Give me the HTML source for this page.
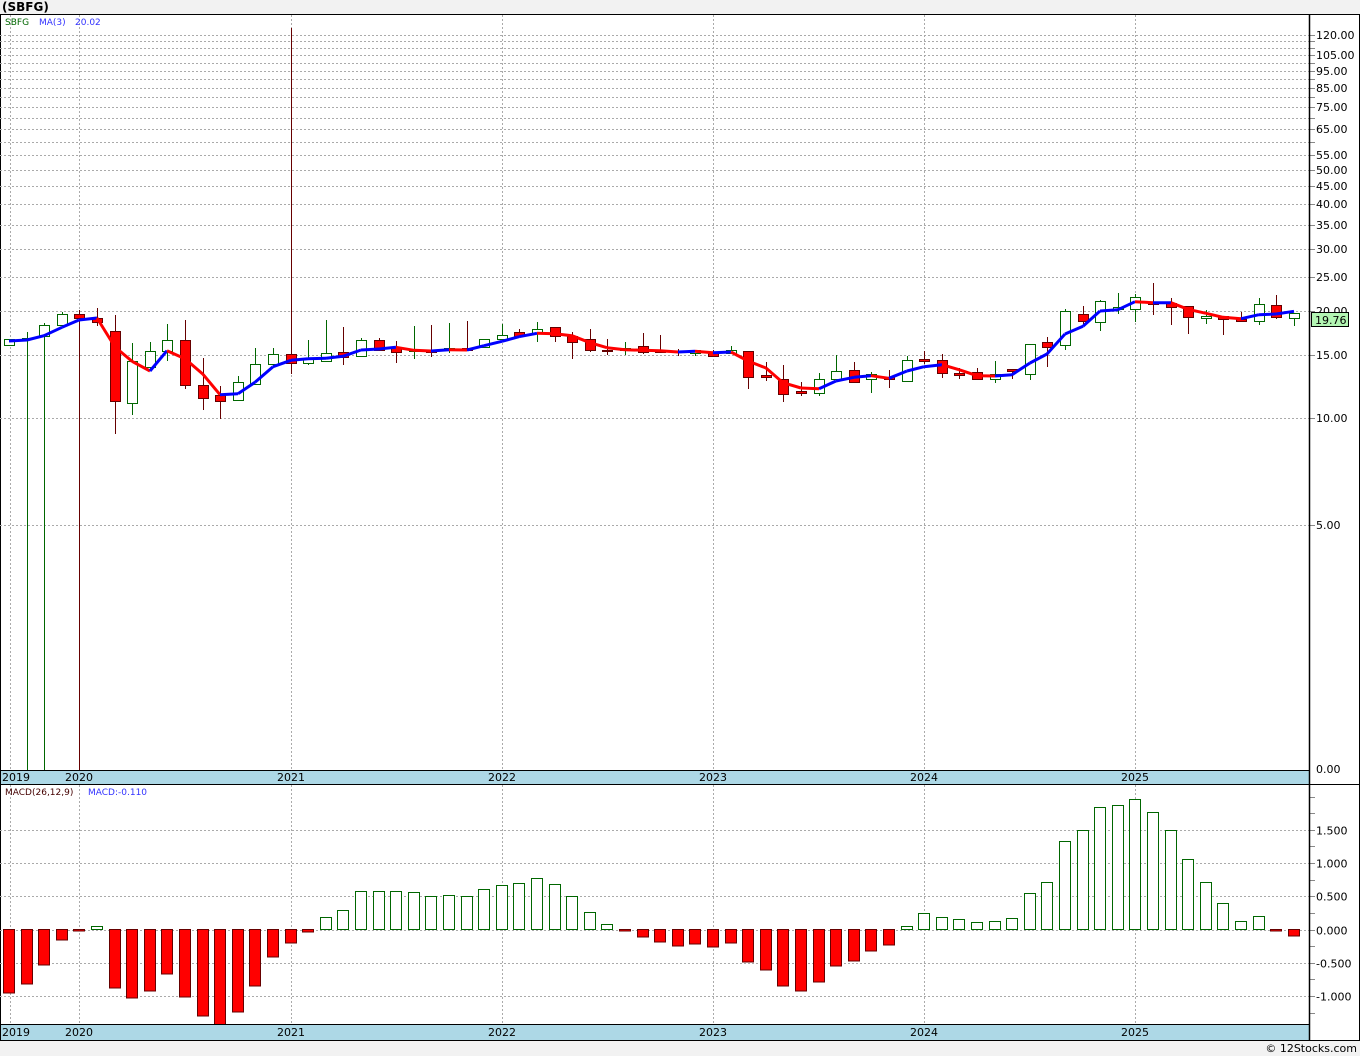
<!DOCTYPE html>
<html><head><meta charset="utf-8">
<style>
html,body{margin:0;padding:0;background:#f2f2f2;width:1360px;height:1056px;overflow:hidden;font-family:"DejaVu Sans","Liberation Sans",sans-serif}
svg{position:absolute;left:0;top:0}
</style></head>
<body>
<svg id="c" width="1360" height="1056" xmlns="http://www.w3.org/2000/svg" font-family="DejaVu Sans, Liberation Sans, sans-serif">
<rect x="0" y="0" width="1360" height="1056" fill="#f2f2f2"/>
<text x="2" y="11" font-size="12" font-weight="bold" fill="#000">(SBFG)</text>
<rect x="0.5" y="14.5" width="1359" height="1026" fill="#fff" stroke="#000"/>
<g id="g"></g>
</svg>
<script>
var g=document.getElementById('g'),s='';
function L(x1,y1,x2,y2,c,w,d){s+='<line x1="'+x1+'" y1="'+y1+'" x2="'+x2+'" y2="'+y2+'" stroke="'+c+'" stroke-width="'+(w||1)+'"'+(d?' stroke-dasharray="'+d+'"':'')+'/>';}
function R(x,y,w,h,f,st){s+='<rect x="'+x+'" y="'+y+'" width="'+w+'" height="'+h+'" fill="'+f+'" stroke="'+st+'" stroke-width="1"/>';}
function T(x,y,t,c,sz,a){s+='<text x="'+x+'" y="'+y+'" font-size="'+(sz||11)+'" fill="'+c+'"'+(a?' text-anchor="'+a+'"':'')+'>'+t+'</text>';}
function py(p){return 418-355*Math.log10(p/10);}
var grid='#aaa',dd='2,2';
// price gridlines
for(var p=5;p<=120;p+=5){var y=Math.round(py(p))+0.5;L(0,y,1309,y,grid,1,dd);L(1309,y,1315,y,'#888',1);}
var lab=[120,105,95,85,75,65,55,50,45,40,35,30,25,20,15,10,5];
lab.forEach(function(p){T(1316,Math.round(py(p))+4,p.toFixed(2),'#000',11);});
T(1316,773,'0.00','#000',11);
// vertical year lines
var yrs=[[10,'2019'],[79,'2020'],[291,'2021'],[502,'2022'],[713,'2023'],[924,'2024'],[1135,'2025']];
yrs.forEach(function(v){L(v[0]+0.5,15,v[0]+0.5,770,grid,1,dd);L(v[0]+0.5,785,v[0]+0.5,1024,grid,1,dd);});
// MACD gridlines
var mz=929.5,ms=66.5;
[1.5,1,0.5,0,-0.5,-1].forEach(function(v){var y=Math.round(mz-v*ms)+0.5;L(0,y,1309,y,grid,1,dd);T(1316,y+4,v.toFixed(3),'#000',11);});
for(var v=-1.25;v<=2;v+=0.25){var y=Math.round(mz-v*ms)+0.5;L(1309,y,1315,y,'#888',1);}
// candles: [bodyTop, bodyBot, high, low, up]
var C=[[339,345,339,345,1],[338,339,332,770,1],[325,336,323,770,1],[314,325,312,325,1],[314,318,310,770,0],[318,322,308,326,0],[331,401,315,434,0],[361,403,343,415,1],[351,367,342,371,1],[340,351,324,361,1],[340,385,320,389,0],[385,398,358,410,0],[395,401,386,419,0],[382,400,376,400,1],[364,384,348,384,1],[354,364,348,364,1],[354,363,28,374,0],[359,363,340,365,1],[353,361,320,361,1],[352,357,327,365,0],[340,356,338,356,1],[340,350,338,350,0],[347,352,341,363,0],[349,351,326,359,1],[350,352,325,357,0],[348,350,323,353,1],[348,350,321,350,0],[339,347,339,347,1],[335,339,324,339,1],[332,336,329,336,0],[329,333,322,342,1],[327,336,327,342,0],[336,342,332,359,0],[339,350,329,352,0],[350,351,339,355,0],[348,350,342,355,1],[346,352,333,354,0],[351,352,335,353,0],[351,352,349,356,0],[350,353,350,356,1],[353,356,350,356,0],[350,353,346,353,1],[351,377,351,389,0],[375,377,362,381,0],[379,394,365,402,0],[391,393,382,396,0],[379,393,373,396,1],[371,379,355,379,1],[370,382,362,382,0],[374,379,372,393,1],[377,379,370,388,0],[360,381,356,381,1],[359,361,351,364,0],[360,373,354,378,0],[373,375,368,379,0],[372,379,368,379,0],[374,379,361,383,1],[369,371,369,379,0],[344,374,344,380,1],[342,347,337,367,0],[311,345,309,350,1],[314,321,306,324,0],[301,322,300,331,1],[307,309,293,314,1],[297,309,294,322,1],[302,304,283,315,0],[303,307,298,325,0],[306,317,306,334,0],[316,318,310,324,1],[316,319,316,335,0],[319,321,312,321,0],[304,321,298,325,1],[305,317,295,319,0],[313,318,313,326,1]];
function cx(i){return Math.round(9+17.6*i);}
C.forEach(function(c,i){var x=cx(i)+0.5,col=c[4]?'#060':'#600';
 L(x,c[2],x,c[0],col,1);L(x,c[1],x,c[3],col,1);
 var h=Math.max(c[1]-c[0],1);R(x-5,c[0]+0.5,10,h,c[4]?'#fff':'#f00',c[4]?'#060':'#600');});
// MA(3)
var cl=C.map(function(c){return c[4]?c[0]:c[1];});cl[1]=340;cl[2]=328;cl[4]=318;
var ma=cl.map(function(v,i){var a=cl.slice(Math.max(0,i-2),i+1);return a.reduce(function(p,q){return p+q;},0)/a.length;});
ma[0]=341;ma[1]=340;
for(var i=1;i<ma.length;i++){L(cx(i-1),ma[i-1].toFixed(1),cx(i),ma[i].toFixed(1),ma[i]>ma[i-1]?'#f00':'#00f',3);}
// last price tag
R(1311.5,312.5,37,14,'#b3f5b3','#000');T(1315,324,'19.76','#000',11);
// macd bars (top y)
var M=[993,984,965,940,930,926,988,998,991,974,997,1016,1025,1012,986,957,943,932,917,910,891,891,891,892,896,895,896,889,885,883,878,884,896,912,924,931,937,942,946,944,947,943,962,970,986,991,982,966,961,951,945,926,913,917,919,922,921,918,893,882,841,830,807,805,799,812,830,859,882,903,921,916,931,936];
M.forEach(function(y,i){var x=cx(i)-5.5;if(y<mz){R(x,y+0.5,11,mz-y-0.5,'#fff','#060');}else{var h=Math.max(y-mz,1.5);R(x,mz,11,h,'#f00','#600');}});
// date bars
s+='<rect x="0.5" y="770.5" width="1309" height="14" fill="#add8e6" stroke="#000"/>';
s+='<rect x="0.5" y="1024.5" width="1309" height="16" fill="#add8e6" stroke="#000"/>';
yrs.forEach(function(v){var x=v[0]==10?16:v[0];T(x,781,v[1],'#000',11,'middle');T(x,1036,v[1],'#000',11,'middle');});
L(1309.5,14,1309.5,1041,'#000',1.5);
L(0,784.5,1360,784.5,'#000',1);
// legends
T(5,25,'SBFG','#060',9);T(39,25,'MA(3)','#33f',9);T(75,25,'20.02','#33f',9);
T(5,795,'MACD(26,12,9)','#400',9);T(88,795,'MACD:-0.110','#33f',9);
// footer
s+='<rect x="0" y="1041" width="1360" height="15" fill="#f2f2f2"/>';
T(1357,1052,'© 12Stocks.com','#000',11,'end');
g.innerHTML=s;
</script>
</body></html>
